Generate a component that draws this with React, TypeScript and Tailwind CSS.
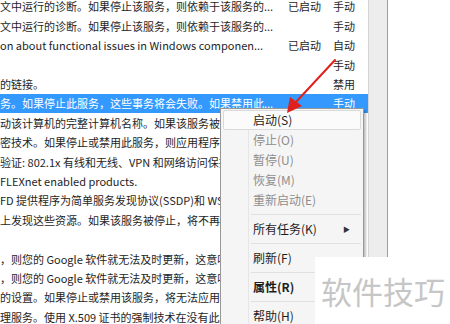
import React from 'react';

type Row = { desc: string; status?: string; start?: string; selected?: boolean };

const rows: Row[] = [
  { desc: '文中运行的诊断。如果停止该服务，则依赖于该服务的...', status: '已启动', start: '手动' },
  { desc: '文中运行的诊断。如果停止该服务，则依赖于该服务的...', start: '手动' },
  { desc: 'on about functional issues in Windows componen...', status: '已启动', start: '自动' },
  { desc: '', start: '手动' },
  { desc: '的链接。', start: '禁用' },
  { desc: '务。如果停止此服务，这些事务将会失败。如果禁用此...', start: '手动', selected: true },
  { desc: '动该计算机的完整计算机名称。如果该服务被停止' },
  { desc: '密技术。如果停止或禁用此服务，则应用程序将' },
  { desc: '验证: 802.1x 有线和无线、VPN 和网络访问保护' },
  { desc: 'FLEXnet enabled products.' },
  { desc: 'FD 提供程序为简单服务发现协议(SSDP)和 WS-' },
  { desc: '上发现这些资源。如果该服务被停止，将不再发布' },
  { desc: '' },
  { desc: '，则您的 Google 软件就无法及时更新，这意味着' },
  { desc: '，则您的 Google 软件就无法及时更新，这意味着' },
  { desc: '的设置。如果停止或禁用该服务，将无法应用组' },
  { desc: '理服务。使用 X.509 证书的强制技术在没有此服务' },
];

type Item = { label: string; disabled?: boolean; bold?: boolean; sub?: boolean; hover?: boolean } | 'sep';

const menu: Item[] = [
  { label: '启动(S)', hover: true },
  { label: '停止(O)', disabled: true },
  { label: '暂停(U)', disabled: true },
  { label: '恢复(M)', disabled: true },
  { label: '重新启动(E)', disabled: true },
  'sep',
  { label: '所有任务(K)', sub: true },
  'sep',
  { label: '刷新(F)' },
  'sep',
  { label: '属性(R)', bold: true },
  'sep',
  { label: '帮助(H)' },
];

export default function App() {
  return (
    <div
      className="relative w-[450px] h-[324px] overflow-hidden bg-white flex text-[#1e1e1e]"
      style={{ fontFamily: '"Noto Sans CJK SC", "Noto Sans", sans-serif' }}
    >
      {/* services list */}
      <div className="w-[368px] shrink-0 flex flex-col -mt-[3px] text-[11px]">
        {rows.map((r, i) => (
          <div
            key={i}
            className={`h-[19.4px] shrink-0 flex items-center whitespace-nowrap ${
              r.selected ? 'bg-[#3399ff] text-white' : ''
            }`}
          >
            {/* rows below the menu only show what the menu leaves uncovered */}
            <div className={`shrink-0 overflow-hidden ${i > 5 ? 'w-[220px]' : 'w-[288px]'}`}>{r.desc}</div>
            {i <= 5 && <div className="w-[45px] shrink-0">{r.status}</div>}
            {i <= 5 && <div className="flex-1">{r.start}</div>}
          </div>
        ))}
      </div>

      {/* scrollbar strip */}
      <div className="w-[20px] shrink-0 bg-[#ededed] border-l border-[#d4d4d4] border-r border-r-[#9c9c9c]" />
      <div className="flex-1 bg-white" />

      {/* context menu */}
      <div className="absolute left-[220px] top-[108px] w-[144px] h-[230px] bg-[#f5f5f5] border border-[#979797] shadow-[2px_2px_2px_rgba(0,0,0,0.25)] text-[12px]">
        <div className="absolute left-[27px] top-0 bottom-0 w-px bg-[#e6e6e6]" />
        <div className="relative flex flex-col pt-px px-[2px]">
          {menu.map((m, i) =>
            m === 'sep' ? (
              <div key={i} className="h-[9px] flex items-center pl-[28px] shrink-0">
                <div className="w-full h-px bg-[#e0e0e0]" />
              </div>
            ) : (
              <div
                key={i}
                className={`h-[20px] shrink-0 flex items-center pl-[29px] pr-[10px] rounded-[2px] ${
                  m.hover ? 'bg-[#fbfbfb] border border-[#dadada]' : 'border border-transparent'
                } ${m.disabled ? 'text-[#8e8e8e]' : 'text-[#1e1e1e]'} ${m.bold ? 'font-bold' : ''}`}
              >
                <span className="flex-1">{m.label}</span>
                {m.sub && <span className="text-[7px] text-[#333]">▶</span>}
              </div>
            )
          )}
        </div>
      </div>

      {/* watermark */}
      <div className="absolute left-[315px] top-[257px] w-[135px] h-[67px] bg-white flex items-center pl-[6px]">
        <span className="text-[31px] leading-none text-[#c6c6c6]">软件技巧</span>
      </div>

      {/* red arrow */}
      <svg className="absolute left-0 top-0 pointer-events-none" width="450" height="324">
        <line x1="335" y1="60" x2="296" y2="102" stroke="#e0201c" strokeWidth="2" strokeLinecap="round" />
        <polygon points="287,113 290,97 302,106" fill="#e0201c" />
      </svg>
    </div>
  );
}
